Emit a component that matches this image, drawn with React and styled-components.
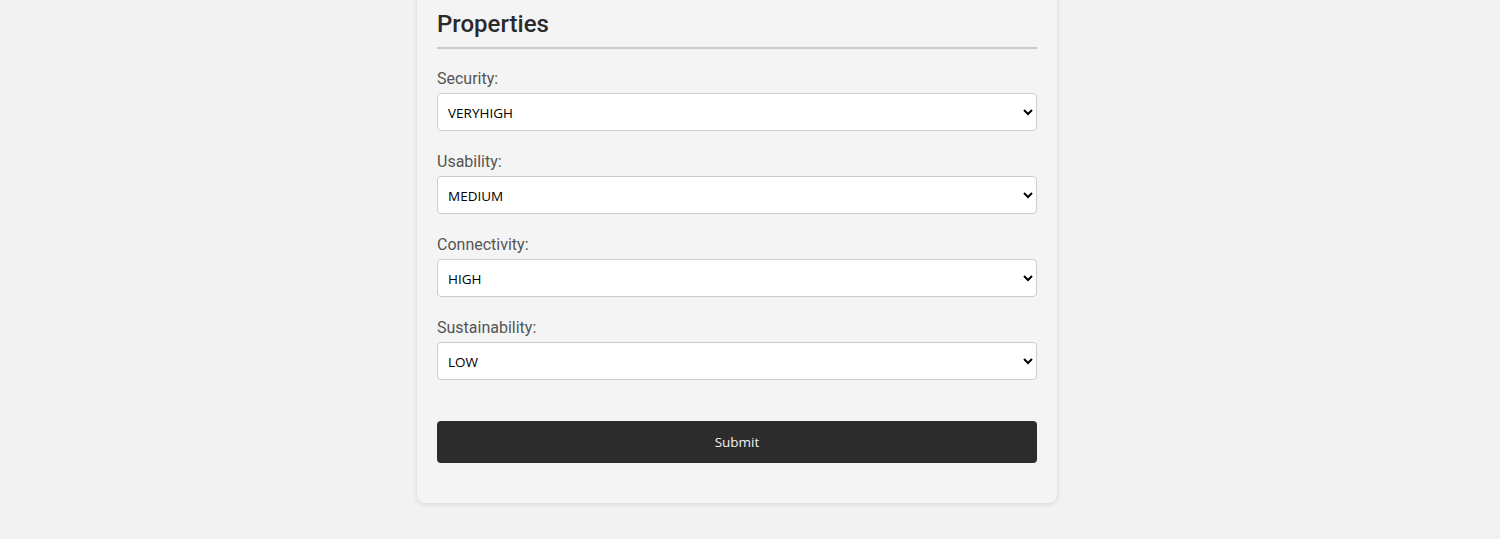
import React, { useState } from 'react';
import styled, { createGlobalStyle } from 'styled-components';

const GlobalStyle = createGlobalStyle`
  html, body {
    margin: 0;
    padding: 0;
    background: #f2f2f2;
    font-family: Roboto, "Liberation Sans", sans-serif;
  }
`;

const fields = [
  { key: 'security', label: 'Security:', value: 'VERYHIGH' },
  { key: 'usability', label: 'Usability:', value: 'MEDIUM' },
  { key: 'connectivity', label: 'Connectivity:', value: 'HIGH' },
  { key: 'sustainability', label: 'Sustainability:', value: 'LOW' },
];

const levels = ['VERYLOW', 'LOW', 'MEDIUM', 'HIGH', 'VERYHIGH'];

const App = () => {
  const [values, setValues] = useState(
    Object.fromEntries(fields.map(f => [f.key, f.value]))
  );

  const handleChange = (key, value) => {
    setValues(prev => ({ ...prev, [key]: value }));
  };

  return (
    <Page>
      <GlobalStyle />
      <Card onSubmit={e => e.preventDefault()}>
        <Title>Properties</Title>
        {fields.map(f => (
          <Group key={f.key}>
            <Label htmlFor={f.key}>{f.label}</Label>
            <Select
              id={f.key}
              value={values[f.key]}
              onChange={e => handleChange(f.key, e.target.value)}
            >
              {levels.map(l => (
                <option key={l} value={l}>
                  {l}
                </option>
              ))}
            </Select>
          </Group>
        ))}
        <SubmitButton type="submit">Submit</SubmitButton>
      </Card>
    </Page>
  );
};

const Page = styled.div`
  display: flex;
  justify-content: center;
  padding-right: 26px;
  min-height: 539px;
`;

const Card = styled.form`
  width: 600px;
  margin-top: -10px;
  margin-bottom: 36px;
  padding: 20px 20px 40px;
  background: #f4f4f4;
  border-radius: 8px;
  box-shadow: 0 1px 5px rgba(0, 0, 0, 0.12);
  display: flex;
  flex-direction: column;
`;

const Title = styled.h2`
  margin: 0 0 20px;
  padding-bottom: 9px;
  font-size: 24px;
  line-height: 28px;
  font-weight: 500;
  color: #2a2a2a;
  border-bottom: 2px solid #cbcbcb;
`;

const Group = styled.div`
  display: flex;
  flex-direction: column;
  margin-bottom: 21px;
`;

const Label = styled.label`
  font-size: 16px;
  line-height: 19px;
  color: #555;
  margin-bottom: 5px;
`;

const Select = styled.select`
  height: 38px;
  padding: 2px 6px 0;
  font-family: "Open Sans", "Noto Sans", sans-serif;
  font-size: 13.5px;
  color: #000;
  background: #fff;
  border: 1px solid #ccc;
  border-radius: 4px;
`;

const SubmitButton = styled.button`
  margin-top: 20px;
  height: 42px;
  background: #2c2c2c;
  color: #f2f2f2;
  border: none;
  border-radius: 4px;
  font-family: "Open Sans", "Noto Sans", sans-serif;
  font-size: 13.5px;
  cursor: pointer;
`;

export default App;
